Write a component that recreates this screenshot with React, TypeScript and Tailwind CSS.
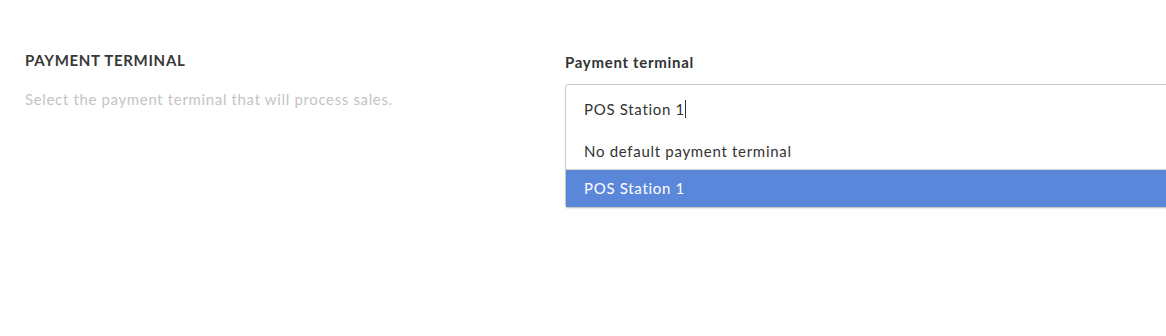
import React from "react";

export default function App() {
  return (
    <div
      className="w-[1166px] h-[336px] bg-white overflow-hidden flex tracking-[0.7px]"
      style={{ fontFamily: "Lato, 'Noto Sans', sans-serif" }}
    >
      <div className="w-[540px] pl-[25px] pt-[51px]">
        <div className="text-[15px] font-bold text-[#383838] leading-[18px]">
          PAYMENT TERMINAL
        </div>
        <div className="mt-[20px] text-[15px] tracking-[0.65px] text-[#c4c4c4] leading-[20px]">
          Select the payment terminal that will process sales.
        </div>
      </div>
      <div className="pt-[53px] ml-[25px] flex-1 min-w-0">
        <div className="text-[15px] font-bold text-[#333333] leading-[18px]">
          Payment terminal
        </div>
        <div className="mt-[13px] w-[640px] border border-[#c8c8c8] rounded-[3px] bg-white shadow-[0_1px_1px_rgba(0,0,0,0.08)]">
          <div className="h-[48px] flex items-center pl-[18px] text-[15px] text-[#333333]">
            <span>POS Station 1</span>
            <span className="inline-block w-[1px] h-[18px] bg-[#333333]" />
          </div>
          <div className="h-[37px] flex items-center pl-[18px] text-[15px] text-[#333333] border-b border-[#d6d6d6]">
            No default payment terminal
          </div>
          <div className="h-[37px] flex items-center pl-[18px] text-[15px] text-white bg-[#5b87db]">
            POS Station 1
          </div>
        </div>
      </div>
    </div>
  );
}
